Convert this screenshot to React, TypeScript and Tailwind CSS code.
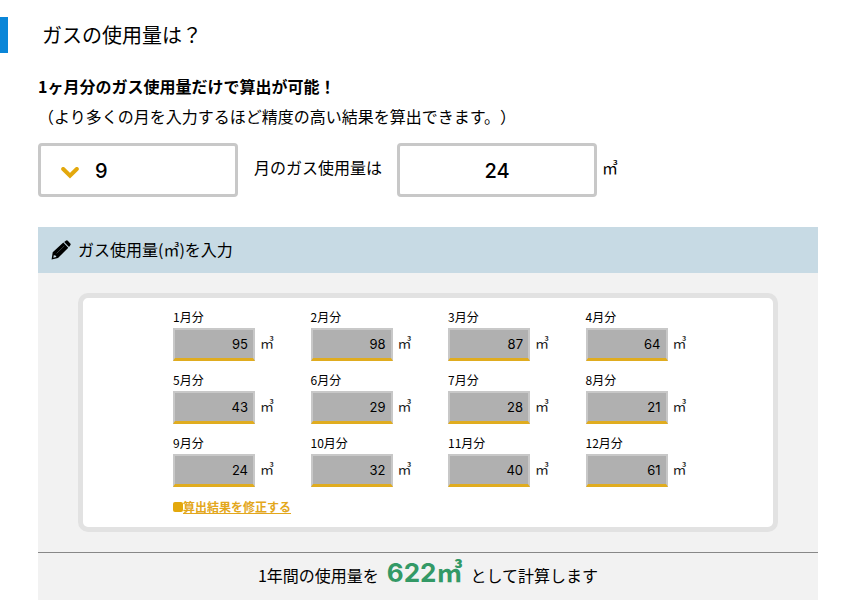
import { useState } from 'react';

const initialUsage = [95, 98, 87, 64, 43, 29, 28, 21, 24, 32, 40, 61];

export default function App() {
  const [month, setMonth] = useState(9);
  const [usage, setUsage] = useState(initialUsage);
  const [editable, setEditable] = useState(false);

  const total = usage.reduce((sum, value) => sum + value, 0);

  const updateUsage = (index: number, value: string) => {
    setUsage(usage.map((item, i) => (i === index ? Number(value) || 0 : item)));
  };

  return (
    <main className="bg-white pt-[17px] pb-4 font-['Noto_Sans_CJK_JP',sans-serif] text-base text-black">
      <h1 className="flex h-9 items-center border-l-8 border-[#0a86d8] pl-[34px] text-xl">
        ガスの使用量は？
      </h1>

      <div className="pr-[25px] pl-[38px]">
        <p className="mt-[18px] leading-[30px] font-bold">1ヶ月分のガス使用量だけで算出が可能！</p>
        <p className="leading-[30px] [text-spacing-trim:space-all]">
          （より多くの月を入力するほど精度の高い結果を算出できます。）
        </p>

        <div className="mt-3 flex items-center">
          <div className="relative w-[200px]">
            <select
              id="month"
              value={month}
              onChange={(event) => setMonth(Number(event.target.value))}
              className="h-[54px] w-full appearance-none rounded-[4px] border-3 border-[#c8c8c8] bg-white pt-0.5 pl-[54px] font-['Inter',sans-serif] text-xl font-medium"
            >
              {usage.map((_, i) => (
                <option key={i} value={i + 1}>
                  {i + 1}
                </option>
              ))}
            </select>
            <ChevronIcon />
          </div>
          <label htmlFor="month" className="mr-[15px] mb-1.5 ml-4">
            月のガス使用量は
          </label>
          <input
            aria-label="ガス使用量"
            value={usage[month - 1]}
            onChange={(event) => updateUsage(month - 1, event.target.value)}
            className="h-[54px] w-[200px] rounded-[4px] border-3 border-[#c8c8c8] pt-0.5 text-center font-['Inter',sans-serif] text-xl font-medium"
          />
          <span className="mb-1.5 ml-[5px]">㎥</span>
        </div>

        <section className="mt-[30px] bg-[#f2f2f2]">
          <h2 className="flex h-[46px] items-center gap-[7px] bg-[#c7dae4] pb-0.5 pl-[13px]">
            <PencilIcon />
            ガス使用量(㎥)を入力
          </h2>

          <div className="px-10 py-5">
            <div className="rounded-[10px] border-5 border-[#e2e2e2] bg-white pt-[10px] pr-[50px] pb-[10px] pl-[90px]">
              <div className="grid grid-cols-4 gap-y-[10px]">
                {usage.map((value, i) => (
                  <MonthField
                    key={i}
                    month={i + 1}
                    value={value}
                    disabled={!editable}
                    onChange={(next) => updateUsage(i, next)}
                  />
                ))}
              </div>
              <button
                type="button"
                onClick={() => setEditable(!editable)}
                className="mt-[10px] flex items-center text-xs leading-5 font-bold text-[#e3a71c]"
              >
                <span className="size-[10px] rounded-[2px] bg-[#e3a80c]" />
                <span className="underline">算出結果を修正する</span>
              </button>
            </div>
          </div>

          <p className="flex h-12 items-baseline justify-center gap-2 border-t border-[#888888] leading-10">
            1年間の使用量を
            <strong className="font-['Inter','Noto_Sans_CJK_JP',sans-serif] text-[26px] font-bold text-[#339966]">
              {total}㎥
            </strong>
            として計算します
          </p>
        </section>
      </div>
    </main>
  );
}

type MonthFieldProps = {
  month: number;
  value: number;
  disabled: boolean;
  onChange: (value: string) => void;
};

function MonthField({ month, value, disabled, onChange }: MonthFieldProps) {
  const id = `usage-${month}`;
  return (
    <div>
      <label htmlFor={id} className="mb-0.5 block text-xs leading-[18px]">
        {month}月分
      </label>
      <div className="flex items-center gap-[5px]">
        <input
          id={id}
          value={value}
          disabled={disabled}
          onChange={(event) => onChange(event.target.value)}
          className="h-[33px] w-[82px] border-2 border-b-3 border-[#c8c8c8] border-b-[#e0ac1f] bg-white pr-[5px] text-right font-['Inter',sans-serif] text-[13px] text-black disabled:bg-[#b0b0b0]"
        />
        <span className="mb-1.5 text-sm text-[#222222]">㎥</span>
      </div>
    </div>
  );
}

function ChevronIcon() {
  return (
    <svg
      viewBox="0 0 18 12"
      className="pointer-events-none absolute top-6 left-[23px] h-3 w-[18px]"
      fill="none"
      stroke="#e3a80c"
      strokeWidth="4"
      strokeLinecap="round"
    >
      <path d="M2.2 2 9 8.6 15.8 2" />
    </svg>
  );
}

function PencilIcon() {
  return (
    <svg viewBox="0 0 20 20" className="mt-0.5 size-5" fill="currentColor">
      <path d="M13.2 1.9 14.8.7q1.1-.8 2 .1l2.5 2.6q.8.9 0 1.9l-1.3 1.6z" />
      <path
        fillRule="evenodd"
        d="M12.3 2.6 17.3 7.7 7 18 .6 19.4 1.7 12.3zM2.9 14.9l-.6 2.9 3-.7-.3-1.4-1.2-.2z"
      />
      <path d="M5.6 13.4 13.2 6" fill="none" stroke="#c7dae4" strokeWidth=".3" />
    </svg>
  );
}
